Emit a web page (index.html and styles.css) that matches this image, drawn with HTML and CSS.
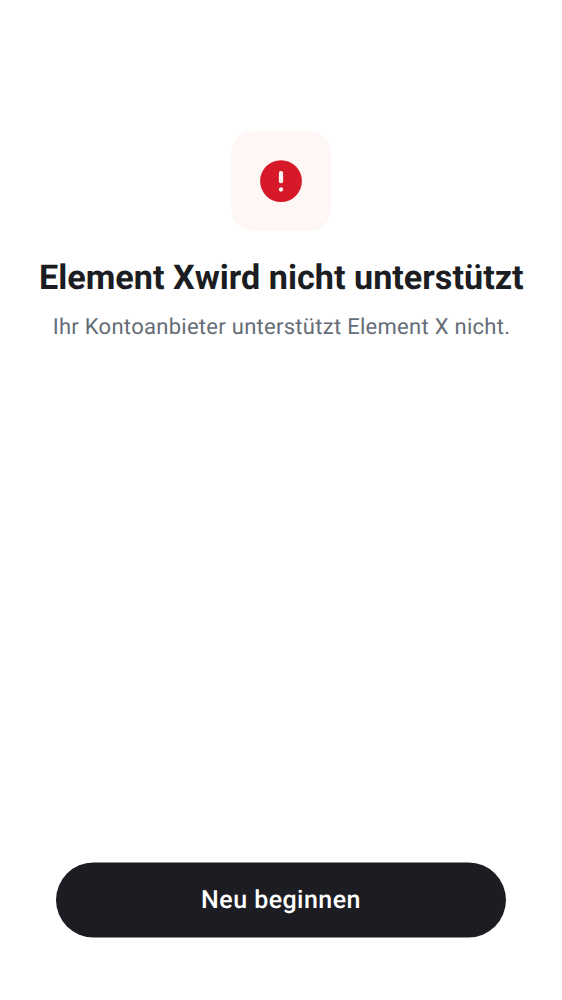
FILE: index.html
```html
<!DOCTYPE html>
<html lang="de">
<head>
<meta charset="utf-8">
<title>Element X</title>
<link rel="stylesheet" href="styles.css">
</head>
<body>
<main class="screen">
  <header class="hero">
    <div class="hero-icon">
      <svg class="alert" viewBox="0 0 42 42" aria-hidden="true">
        <circle cx="21" cy="21.1" r="20.9" fill="#d51928"/>
        <rect x="18.9" y="10.9" width="4.2" height="12.4" rx="1.8" fill="#fff7f6"/>
        <circle cx="21" cy="29.5" r="2.15" fill="#fff7f6"/>
      </svg>
    </div>
    <h1 class="title">Element Xwird nicht unterstützt</h1>
    <p class="subtitle">Ihr Kontoanbieter unterstützt Element X nicht.</p>
  </header>
  <button class="primary" type="button">
    <svg class="pill" viewBox="0 0 450 76" aria-hidden="true">
      <rect y="0.5" width="450" height="75" rx="37.5" fill="#1b1d22"/>
    </svg>
    <span class="label">Neu beginnen</span>
  </button>
</main>
</body>
</html>
```

FILE: styles.css
```css
* {
  box-sizing: border-box;
}

body {
  margin: 0;
  background: #fff;
  font-family: Roboto, sans-serif;
  text-rendering: geometricPrecision;
}

.screen {
  display: flex;
  flex-direction: column;
  height: 1000px;
  padding: 131px 0 62px;
}

.hero {
  display: flex;
  flex: 1;
  flex-direction: column;
  align-items: center;
}

.hero-icon {
  display: flex;
  align-items: center;
  justify-content: center;
  width: 100px;
  height: 100px;
  border-radius: 22px;
  background: #fff7f6;
}

.alert {
  width: 42px;
  height: 42px;
}

.title {
  margin: 25px 0 0;
  padding-left: 0.6px;
  color: #1b1d22;
  font-size: 34.2px;
  font-weight: 700;
  line-height: 44px;
  white-space: nowrap;
}

.subtitle {
  margin: 13px 0 0;
  padding-left: 1px;
  color: #656d77;
  font-size: 22px;
  letter-spacing: 0.28px;
  line-height: 30px;
  white-space: nowrap;
}

.primary {
  display: grid;
  height: 76px;
  margin: 0 56px;
  padding: 0;
  border: 0;
  background: none;
  color: #fff;
  font: 500 25px/74px Roboto, sans-serif;
  letter-spacing: 0.45px;
  text-rendering: geometricPrecision;
}

.pill,
.label {
  grid-area: 1 / 1;
}

.pill {
  width: 450px;
  height: 76px;
}

.label {
  z-index: 1;
  padding-top: 2px;
}
```
